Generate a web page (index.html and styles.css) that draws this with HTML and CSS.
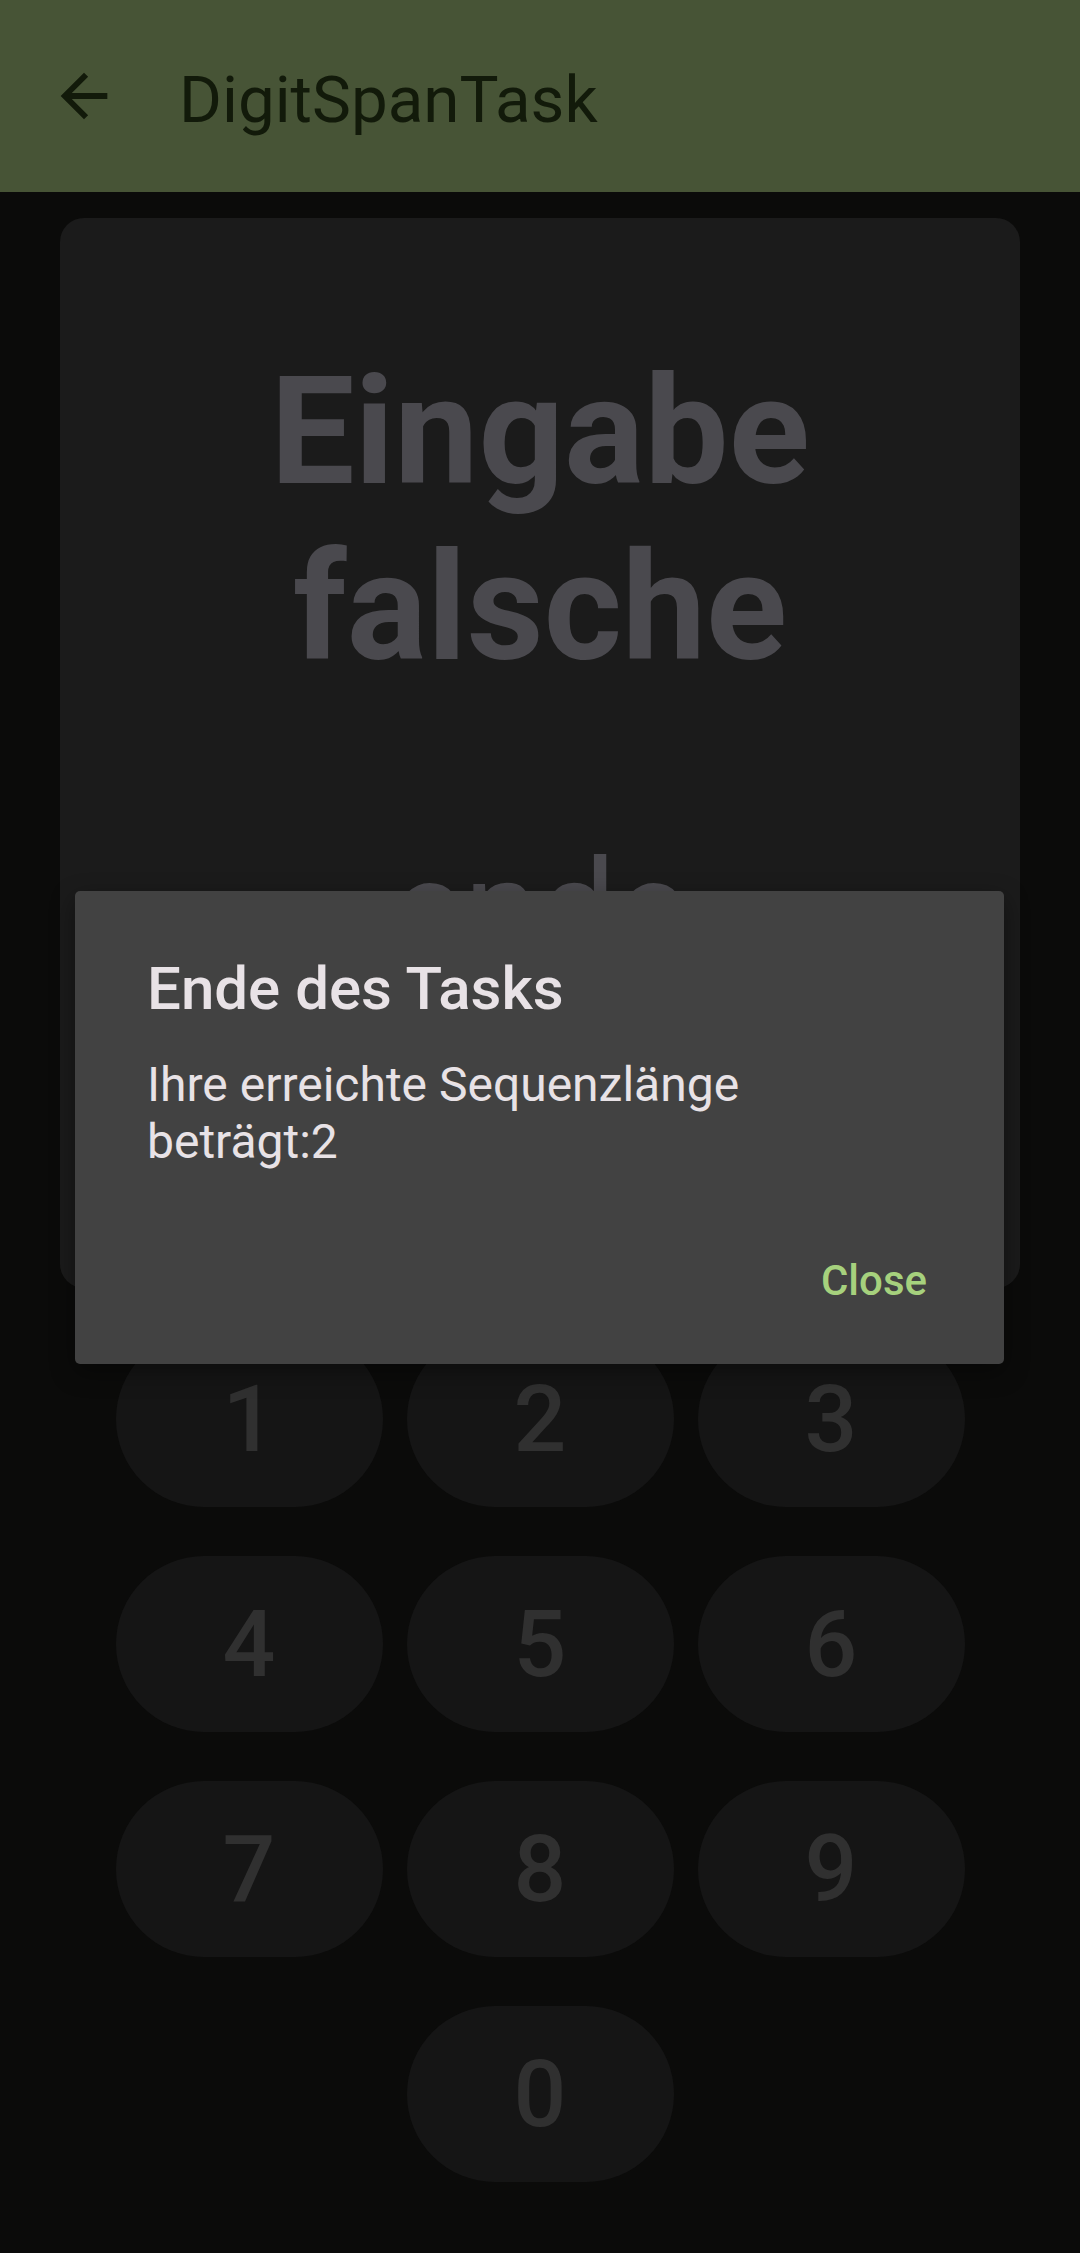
FILE: index.html
```html
<!DOCTYPE html>
<html lang="de">
<head>
<meta charset="utf-8">
<title>DigitSpanTask</title>
<link rel="stylesheet" href="styles.css">
</head>
<body>
<div class="screen">
  <header class="appbar">
    <svg class="back" viewBox="0 0 24 24" aria-hidden="true"><path d="M20 11H7.83l5.59-5.59L12 4l-8 8 8 8 1.41-1.41L7.83 13H20v-2z"/></svg>
    <h1 class="title">DigitSpanTask</h1>
  </header>

  <main class="content">
    <section class="card">
      <p class="status">Eingabe falsche</p>
      <p class="sub">ende</p>
    </section>

    <div class="keypad">
      <div class="key">1</div>
      <div class="key">2</div>
      <div class="key">3</div>
      <div class="key">4</div>
      <div class="key">5</div>
      <div class="key">6</div>
      <div class="key">7</div>
      <div class="key">8</div>
      <div class="key">9</div>
      <div class="key key-zero">0</div>
    </div>
  </main>

  <div class="dialog" role="dialog">
    <h2 class="dialog-title">Ende des Tasks</h2>
    <p class="dialog-body">Ihre erreichte Sequenzlänge beträgt:2</p>
    <div class="dialog-actions">
      <span class="dialog-btn">Close</span>
    </div>
  </div>
</div>
</body>
</html>
```

FILE: styles.css
```css
* { box-sizing: border-box; }

html, body {
  margin: 0;
  padding: 0;
  background: #0b0b0a;
  font-family: Roboto, "Noto Sans", "Liberation Sans", sans-serif;
}

.screen {
  position: relative;
  width: 1080px;
  height: 2253px;
  overflow: hidden;
  background: #0b0b0a;
}

.appbar {
  height: 192px;
  background: #475436;
  display: flex;
  align-items: center;
  padding-left: 49px;
}

.back {
  width: 70px;
  height: 70px;
  fill: #121a0a;
  flex: none;
}

.title {
  margin: 7px 0 0 60px;
  font-size: 65.5px;
  font-weight: 400;
  color: #121a0a;
  line-height: normal;
}

.content {
  display: flex;
  flex-direction: column;
  align-items: center;
}

.card {
  margin-top: 26px;
  width: 960px;
  height: 1070px;
  background: #1b1b1b;
  border-radius: 24px;
  padding-top: 126px;
  text-align: center;
}

.status {
  margin: 0;
  font-size: 150px;
  font-weight: 700;
  line-height: normal;
  color: #4a494e;
}

.sub {
  margin: 134px 0 0;
  font-size: 136px;
  font-weight: 400;
  line-height: normal;
  color: #4a494e;
}

.keypad {
  margin-top: 43px;
  display: grid;
  grid-template-columns: repeat(3, 267px);
  grid-auto-rows: 176px;
  column-gap: 24px;
  row-gap: 49px;
}

.key {
  background: #151515;
  border-radius: 88px;
  display: flex;
  align-items: center;
  justify-content: center;
  font-size: 93px;
  font-weight: 500;
  color: #303030;
}

.key-zero {
  grid-column: 2;
}

.dialog {
  position: absolute;
  left: 75px;
  top: 891px;
  width: 929px;
  background: #424242;
  border-radius: 5px;
  padding: 62px 77px 59px 72px;
  box-shadow: 0 8px 24px rgba(0, 0, 0, 0.4);
}

.dialog-title {
  margin: 0;
  font-size: 60px;
  font-weight: 500;
  line-height: normal;
  color: #e8e2e6;
}

.dialog-body {
  margin: 32px 0 0;
  padding-right: 40px;
  font-size: 48px;
  font-weight: 400;
  line-height: 57px;
  color: #e8e2e6;
}

.dialog-actions {
  margin-top: 86px;
  display: flex;
  justify-content: flex-end;
}

.dialog-btn {
  font-size: 42px;
  font-weight: 500;
  line-height: normal;
  color: #a6d17d;
}
```
